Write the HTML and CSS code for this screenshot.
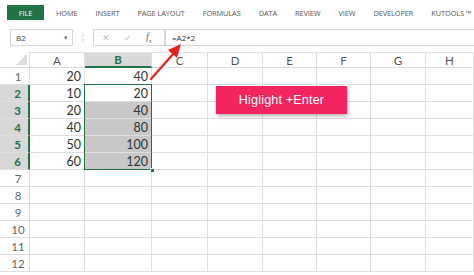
FILE: index.html
```html
<!DOCTYPE html>
<html>
<head>
<meta charset="utf-8">
<link rel="stylesheet" href="styles.css">
</head>
<body>
<div class="page">
  <div class="ribbon">
    <div class="file">FILE</div>
    <div class="tab">HOME</div>
    <div class="tab">INSERT</div>
    <div class="tab">PAGE LAYOUT</div>
    <div class="tab">FORMULAS</div>
    <div class="tab">DATA</div>
    <div class="tab">REVIEW</div>
    <div class="tab">VIEW</div>
    <div class="tab">DEVELOPER</div>
    <div class="tab">KUTOOLS ™</div>
  </div>
  <div class="fbar">
    <div class="namebox"><span>B2</span><span class="dd">▾</span></div>
    <div class="dots">⁞</div>
    <div class="fxbox">
      <span class="x">✕</span>
      <span class="ck">✓</span>
      <span class="fx"><i>f</i><sub>x</sub></span>
    </div>
    <div class="input">=A2*2</div>
  </div>
  <div class="sheet">
    <div class="grid">
      <div class="corner"><div class="tri"></div></div>
      <div class="ch">A</div>
      <div class="ch sel">B</div>
      <div class="ch">C</div>
      <div class="ch">D</div>
      <div class="ch">E</div>
      <div class="ch">F</div>
      <div class="ch">G</div>
      <div class="ch">H</div>

      <div class="rh">1</div><div class="c num">20</div><div class="c num">40</div><div class="c"></div><div class="c"></div><div class="c"></div><div class="c"></div><div class="c"></div><div class="c"></div>
      <div class="rh sel">2</div><div class="c num">10</div><div class="c num">20</div><div class="c"></div><div class="c"></div><div class="c"></div><div class="c"></div><div class="c"></div><div class="c"></div>
      <div class="rh sel">3</div><div class="c num">20</div><div class="c num hl">40</div><div class="c"></div><div class="c"></div><div class="c"></div><div class="c"></div><div class="c"></div><div class="c"></div>
      <div class="rh sel">4</div><div class="c num">40</div><div class="c num hl">80</div><div class="c"></div><div class="c"></div><div class="c"></div><div class="c"></div><div class="c"></div><div class="c"></div>
      <div class="rh sel">5</div><div class="c num">50</div><div class="c num hl">100</div><div class="c"></div><div class="c"></div><div class="c"></div><div class="c"></div><div class="c"></div><div class="c"></div>
      <div class="rh sel">6</div><div class="c num">60</div><div class="c num hl">120</div><div class="c"></div><div class="c"></div><div class="c"></div><div class="c"></div><div class="c"></div><div class="c"></div>
      <div class="rh">7</div><div class="c"></div><div class="c"></div><div class="c"></div><div class="c"></div><div class="c"></div><div class="c"></div><div class="c"></div><div class="c"></div>
      <div class="rh">8</div><div class="c"></div><div class="c"></div><div class="c"></div><div class="c"></div><div class="c"></div><div class="c"></div><div class="c"></div><div class="c"></div>
      <div class="rh">9</div><div class="c"></div><div class="c"></div><div class="c"></div><div class="c"></div><div class="c"></div><div class="c"></div><div class="c"></div><div class="c"></div>
      <div class="rh">10</div><div class="c"></div><div class="c"></div><div class="c"></div><div class="c"></div><div class="c"></div><div class="c"></div><div class="c"></div><div class="c"></div>
      <div class="rh">11</div><div class="c"></div><div class="c"></div><div class="c"></div><div class="c"></div><div class="c"></div><div class="c"></div><div class="c"></div><div class="c"></div>
      <div class="rh">12</div><div class="c"></div><div class="c"></div><div class="c"></div><div class="c"></div><div class="c"></div><div class="c"></div><div class="c"></div><div class="c"></div>
    </div>
    <div class="selbox"><div class="handle"></div></div>
    <div class="callout">Higlight +Enter</div>
  </div>
  <svg class="arrow" width="474" height="275" viewBox="0 0 474 275">
    <line x1="151" y1="79" x2="174" y2="53" stroke="#e8201e" stroke-width="2.2" stroke-linecap="round"/>
    <polygon points="181,44 177,58 168,50" fill="#e8201e"/>
  </svg>
</div>
</body>
</html>
```

FILE: styles.css
```css
* { box-sizing: border-box; }
html, body { margin: 0; padding: 0; background: #fff; }
body { font-family: "Open Sans", "Liberation Sans", sans-serif; color: #444; }
.page { position: relative; width: 474px; height: 275px; overflow: hidden; }

.ribbon { height: 25px; display: flex; align-items: center; padding-left: 7px; gap: 18px; font-size: 7.4px; color: #555; letter-spacing: -0.1px; }
.file { width: 37px; height: 15px; background: #217346; color: #fff; display: flex; align-items: center; justify-content: center; margin-right: -6px; margin-top: 0px; }
.tab { white-space: nowrap; }

.fbar { height: 25px; display: flex; align-items: center; font-size: 8px; }
.namebox { margin-left: 10px; width: 63px; height: 17px; border: 1px solid #d6d6d6; display: flex; align-items: center; justify-content: space-between; padding: 0 4px 0 5px; color: #444; }
.dd { font-size: 7px; color: #777; }
.dots { width: 20px; text-align: center; color: #bbb; font-size: 10px; }
.fxbox { width: 72px; height: 17px; border: 1px solid #d6d6d6; display: flex; align-items: center; padding-left: 8px; gap: 14px; color: #c2c2c2; font-size: 9px; }
.fx { color: #666; font-family: "Liberation Serif", serif; font-size: 10px; }
.fx sub { font-size: 6px; }
.input { flex: 1; height: 17px; border: 1px solid #d6d6d6; border-right: none; display: flex; align-items: center; padding-left: 6px; color: #333; font-size: 8px; }

.sheet { position: relative; margin-top: 2px; }
.grid { display: grid; grid-template-columns: 30px 55px 67px 56px 55px 54px 54px 55px 48px; grid-template-rows: 16px; grid-auto-rows: 17px; font-family: "Lato", "Open Sans", sans-serif; }
.grid > div { border-right: 1px solid #dedede; border-bottom: 1px solid #dedede; }
.corner { position: relative; }
.tri { position: absolute; right: 2px; bottom: 2px; width: 0; height: 0; border-left: 11px solid transparent; border-bottom: 11px solid #dcdcdc; }
.ch { display: flex; align-items: center; justify-content: center; font-size: 11.5px; color: #555; border-top: 1px solid #e4e4e4; }
.ch.sel { background: #d8d8d8; color: #217346; font-weight: bold; border-bottom: 2px solid #217346 !important; }
.rh { display: flex; align-items: center; justify-content: center; padding-left: 7px; font-size: 11.5px; color: #666; }
.rh.sel { background: #d8d8d8; color: #217346; font-weight: bold; border-right: 2px solid #217346 !important; }
.c { font-size: 12.5px; color: #333; }
.num { display: flex; align-items: center; justify-content: flex-end; padding-right: 3px; }
.hl { background: #c8c8c8; }

.selbox { position: absolute; left: 84px; top: 32px; width: 68px; height: 86px; border: 1.5px solid #217346; pointer-events: none; }
.handle { position: absolute; right: -4px; bottom: -4px; width: 5px; height: 5px; background: #217346; border: 1px solid #fff; }

.callout { position: absolute; left: 216px; top: 34px; width: 131px; height: 28px; background: #f2255f; color: #fff; display: flex; align-items: center; justify-content: center; font-family: "Liberation Sans", Arial, sans-serif; font-size: 12.5px; letter-spacing: 0.2px; box-shadow: 1px 2px 4px rgba(0,0,0,0.3); }

.arrow { position: absolute; left: 0; top: 0; pointer-events: none; }
```
